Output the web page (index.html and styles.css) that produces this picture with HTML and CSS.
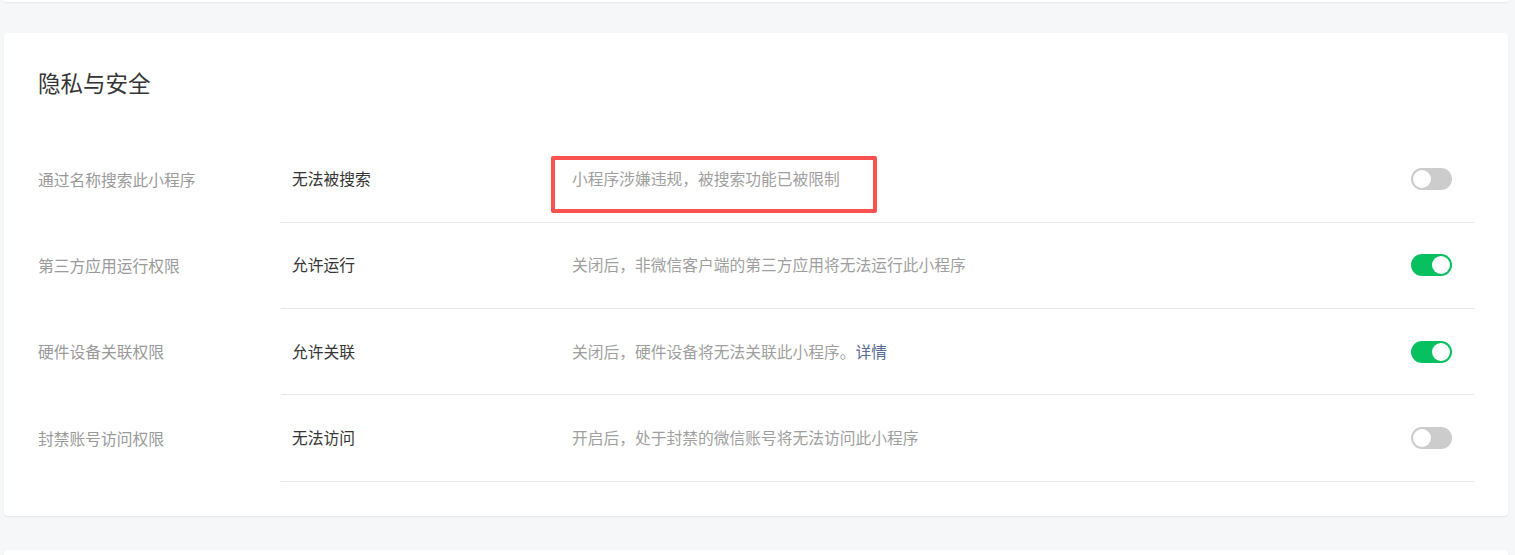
FILE: index.html
```html
<!DOCTYPE html>
<html lang="zh-CN">
<head>
<meta charset="utf-8">
<title>隐私与安全</title>
<link rel="stylesheet" href="styles.css">
</head>
<body>
<div class="card card-prev"></div>
<section class="card main">
  <h2 class="title">隐私与安全</h2>
  <div class="row">
    <div class="label">通过名称搜索此小程序</div>
    <div class="content">
      <div class="value">无法被搜索</div>
      <div class="desc">
        <span class="highlight"></span>
        小程序涉嫌违规，被搜索功能已被限制
      </div>
      <span class="switch off"><span class="knob"></span></span>
    </div>
  </div>
  <div class="row">
    <div class="label">第三方应用运行权限</div>
    <div class="content">
      <div class="value">允许运行</div>
      <div class="desc">关闭后，非微信客户端的第三方应用将无法运行此小程序</div>
      <span class="switch on"><span class="knob"></span></span>
    </div>
  </div>
  <div class="row">
    <div class="label">硬件设备关联权限</div>
    <div class="content">
      <div class="value">允许关联</div>
      <div class="desc">关闭后，硬件设备将无法关联此小程序。<a class="link" href="#">详情</a></div>
      <span class="switch on"><span class="knob"></span></span>
    </div>
  </div>
  <div class="row">
    <div class="label">封禁账号访问权限</div>
    <div class="content">
      <div class="value">无法访问</div>
      <div class="desc">开启后，处于封禁的微信账号将无法访问此小程序</div>
      <span class="switch off"><span class="knob"></span></span>
    </div>
  </div>
</section>
<div class="card card-next"></div>
</body>
</html>
```
FILE: styles.css
```css
html, body {
  margin: 0;
  padding: 0;
  background: #f6f7f9;
  font-family: "Noto Sans CJK SC", "Noto Sans", "Liberation Sans", sans-serif;
  overflow: hidden;
}

.card {
  background: #ffffff;
  margin-left: 4px;
  width: 1504px;
  border-radius: 4px;
  box-shadow: 0 1px 2px rgba(0, 0, 0, 0.08);
  box-sizing: border-box;
}

.card-prev {
  height: 2px;
  border-radius: 0 0 4px 4px;
}

.main {
  margin-top: 31px;
  padding: 32.5px 34px 34px 34px;
}

.card-next {
  margin-top: 34px;
  height: 5px;
  border-radius: 4px 4px 0 0;
}

.title {
  margin: 0 0 39px 0;
  font-size: 22.5px;
  line-height: 32px;
  font-weight: normal;
  color: #353535;
}

.row {
  display: flex;
  align-items: stretch;
  height: 86.33px;
  font-size: 15.75px;
  line-height: 22px;
}

.label {
  width: 243px;
  flex: none;
  display: flex;
  align-items: center;
  color: #9a9a9a;
}

.content {
  flex: 1;
  display: flex;
  align-items: center;
  border-bottom: 1px solid #e6e6e6;
  padding-right: 22px;
}

.value {
  width: 280px;
  flex: none;
  padding-left: 11px;
  color: #353535;
}

.desc {
  flex: 1;
  position: relative;
  color: #9f9f9f;
}

.link {
  color: #576b95;
  text-decoration: none;
}

.highlight {
  position: absolute;
  left: -21px;
  top: -12px;
  width: 326px;
  height: 57px;
  border: 4px solid #fa5151;
  border-radius: 2px;
  box-sizing: border-box;
}

.switch {
  flex: none;
  position: relative;
  width: 41px;
  height: 22px;
  border-radius: 11px;
  background: #cccccc;
}

.switch.on {
  background: #07c160;
}

.knob {
  position: absolute;
  top: 2px;
  left: 2px;
  width: 18px;
  height: 18px;
  border-radius: 50%;
  background: #ffffff;
}

.switch.on .knob {
  left: 21px;
}
```
